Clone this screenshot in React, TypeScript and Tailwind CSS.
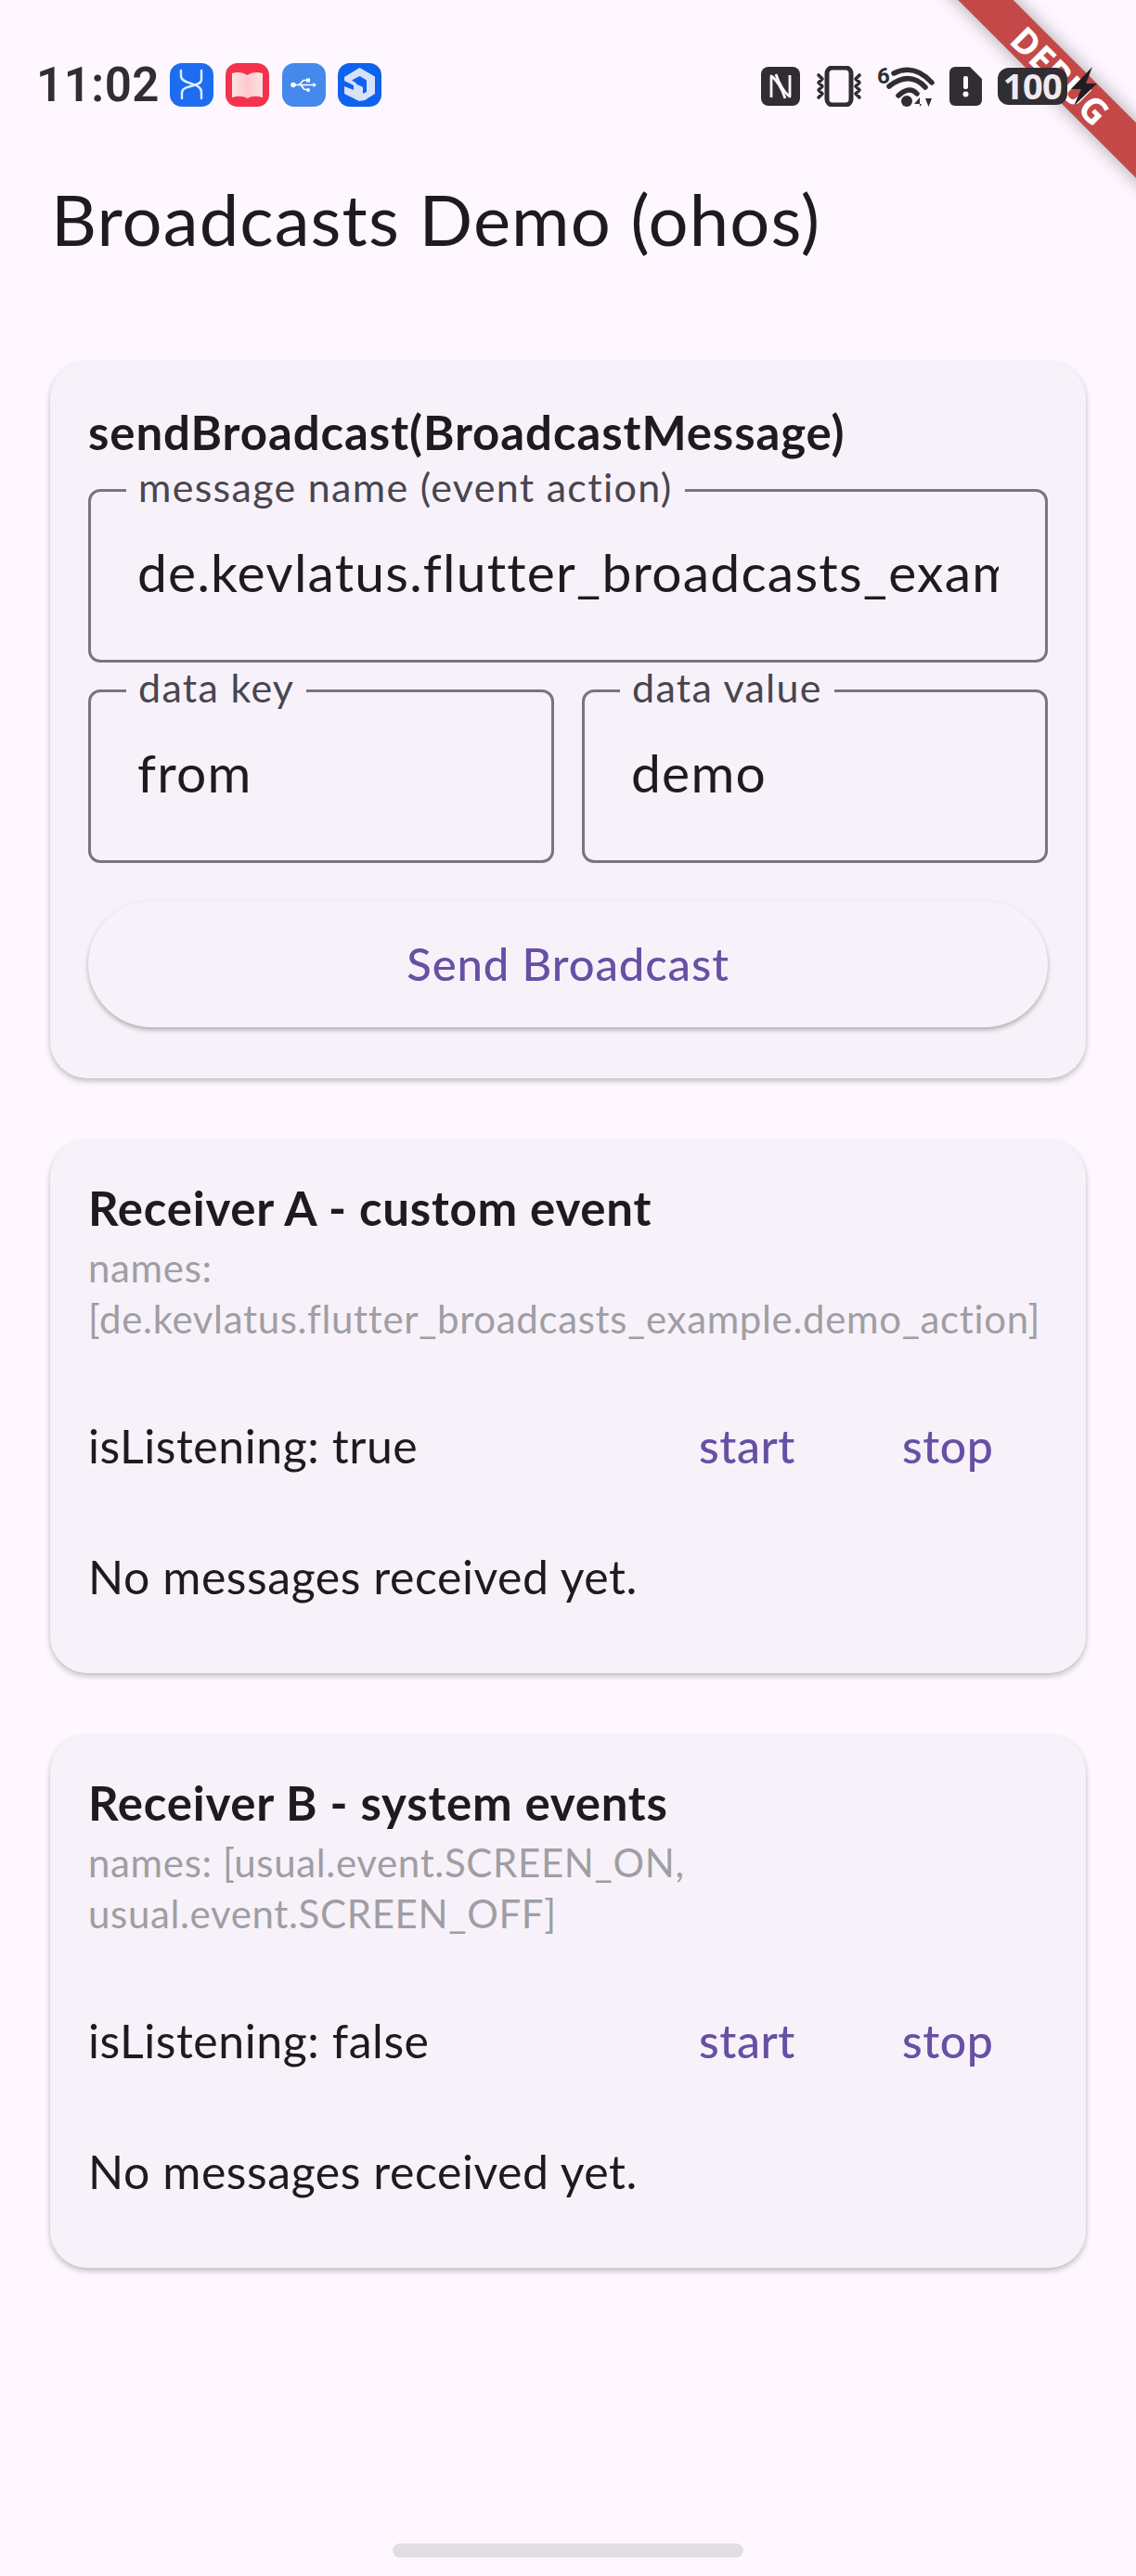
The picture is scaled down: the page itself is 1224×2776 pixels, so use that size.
const AppIcon = ({ bg, children }: { bg: string; children: React.ReactNode }) => (
  <div className={`w-[47px] h-[47px] rounded-[13px] flex items-center justify-center ${bg}`}>
    <svg viewBox="0 0 47 47" className="w-[47px] h-[47px]">{children}</svg>
  </div>
);

// ============= Status bar =============
const StatusBar = () => (
  <div className="relative z-10 h-[68px] mt-[68px] mx-0 flex items-start justify-between pl-[39px] pr-[39px] text-[#312e33]">
    <div className="flex items-center h-[47px]">
      <span className="text-[51px] leading-none font-semibold font-['Roboto',sans-serif] mr-[11px] tracking-[0.5px]">11:02</span>
      <div className="flex gap-[13.5px]">
        <AppIcon bg="bg-[#1e6cf0]">
          <g fill="none" stroke="#dff0ff" strokeWidth="2.4" strokeLinecap="round">
            <path d="M12 8v6c0 9 22 7 22 17v7" />
            <path d="M34 8v10c0 8-21 5-21 14v6" />
          </g>
        </AppIcon>
        <AppIcon bg="bg-[#f4324c]">
          <defs>
            <linearGradient id="bookPage" x1="0" x2="1" y1="0" y2="0">
              <stop offset="0" stopColor="#fde4e2" />
              <stop offset="0.5" stopColor="#fbc9cd" />
              <stop offset="1" stopColor="#fde4e2" />
            </linearGradient>
          </defs>
          <path d="M7 11c7-2 12-1 16.500 2C28 10 33 9 40 11v26c-7-2-12-1.500-16.500 1C19 35.500 14 35 7 37z" fill="url(#bookPage)" />
        </AppIcon>
        <AppIcon bg="bg-[#4589ec]">
          <g fill="none" stroke="#fff" strokeWidth="1.600">
            <path d="M12 23.500h24M18 23.500l5-5h3M20 23.500l4 5h3" />
          </g>
          <circle cx="12" cy="23.500" r="2.800" fill="#fff" />
          <path d="M37 23.500l-3.500-2.500v5z" fill="#fff" />
          <rect x="26" y="16.500" width="4" height="4" fill="#fff" />
          <circle cx="28" cy="29" r="2" fill="#fff" />
        </AppIcon>
        <AppIcon bg="bg-[#0f62ee]">
          <path d="M23.500 5L40 14.500V33L29 40 23 41 7 33V15z" fill="#d6e1fa" />
          <path d="M15 18.500L23.500 14 31 18.500V31L27 33V25L22 23z" fill="#0f62ee" />
          <path d="M7 19l10 5v5L7 25z" fill="#0f62ee" />
          <path d="M19 22l4-2 4 2v4l-4-2z" fill="#0f62ee" />
        </AppIcon>
      </div>
    </div>

    <div className="flex items-center h-[47px] relative top-[1px]">
      {/* NFC */}
      <svg viewBox="0 0 42 42" className="w-[42px] h-[42px] mr-[16px]">
        <rect width="42" height="42" rx="8" fill="#312e33" />
        <g fill="none" stroke="#fdf7ff" strokeWidth="2.8" strokeLinejoin="round">
          <path d="M11 33V10c5 3 12 14 15 24" />
          <path d="M31 9v23c-5-3-12-14-15-24" />
        </g>
      </svg>
      {/* vibrate */}
      <svg viewBox="0 0 52 44" className="w-[52px] h-[44px] mr-[15px]">
        <rect x="13" y="2" width="26" height="40" rx="6" fill="none" stroke="#312e33" strokeWidth="5" />
        <path d="M4 10l4 4-4 4 4 4-4 4 4 4-4 4M48 10l-4 4 4 4-4 4 4 4-4 4 4 4" fill="none" stroke="#312e33" strokeWidth="3.6" strokeLinecap="round" strokeLinejoin="round" />
      </svg>
      {/* wifi 6 */}
      <svg viewBox="0 0 62 44" className="w-[62px] h-[44px] mr-[16px]">
        <text x="0" y="19" fontSize="24" fontWeight="700" fill="#312e33" fontFamily="Roboto, sans-serif">6</text>
        <path d="M18 8Q40-3 59 18M13 22Q35 5 52 23M23 32Q35 21 43 30" fill="none" stroke="#312e33" strokeWidth="5.500" strokeLinecap="round" />
        <circle cx="32" cy="38" r="6" fill="#312e33" />
        <path d="M46 44v-10l-6 7h8M52 35l7 0-3.500 9z" fill="#312e33" />
      </svg>
      {/* sim alert */}
      <svg viewBox="0 0 35 42" className="w-[35px] h-[42px] mr-[17px]">
        <path d="M6 0h16l13 13v23a6 6 0 0 1-6 6H6a6 6 0 0 1-6-6V6a6 6 0 0 1 6-6z" fill="#312e33" />
        <rect x="15" y="10" width="5" height="14" rx="2" fill="#fdf7ff" />
        <circle cx="17.500" cy="29.500" r="3" fill="#fdf7ff" />
      </svg>
      {/* battery */}
      <div className="w-[75px] h-[40px] rounded-[12px] bg-[#312e33] text-[#f0e9ee] text-[38px] leading-[39px] font-bold text-center font-['Open_Sans',sans-serif] tracking-[-0.5px]">
        100
      </div>
      <svg viewBox="0 0 36 42" className="w-[36px] h-[42px] -ml-[1px]">
        <path d="M28 0L5 24h11l-8 18 25-24H21z" fill="#211d22" />
      </svg>
    </div>
  </div>
);

// ============= Form pieces =============
const OutlinedField = ({ label, value, className = '' }: { label: string; value: string; className?: string }) => (
  <div className={`relative h-[187px] rounded-[13px] border-[3px] border-[#79747e] pl-[50px] pr-[50px] ${className}`}>
    <span className="absolute left-[38px] -top-[29px] bg-[#f7f2fa] px-[13px] text-[43px] leading-[48px] tracking-[1.3px] text-[#49454f] whitespace-nowrap">
      {label}
    </span>
    <div className="overflow-hidden whitespace-nowrap text-[57px] leading-[70px] tracking-[1.2px] mt-[51px] text-[#1d1b20]">{value}</div>
  </div>
);

const ReceiverCard = ({ title, names, listening }: { title: string; names: string[]; listening: string }) => (
  <section className="bg-[#f7f2fa] rounded-[40px] shadow-[0_3px_6px_rgba(0,0,0,0.25)] h-[574px] pl-[41px] pr-[30px] pt-[41px]">
    <h2 className="text-[51px] leading-[64px] tracking-[0.75px] font-bold text-[#1d1b20]">{title}</h2>
    <div className="mt-[5px] text-[42px] leading-[55px] tracking-[0.65px] text-[#a09ea3] whitespace-nowrap">
      {names.map(line => <div key={line}>{line}</div>)}
    </div>
    <div className="mt-[79px] flex items-center h-[60px] text-[50px] tracking-[0.55px] text-[#1d1b20]">
      <span className="flex-1">{listening}</span>
      <span className="w-[219px] text-[#6750a4] font-medium">start</span>
      <span className="w-[168px] text-[#6750a4] font-medium">stop</span>
    </div>
    <p className="mt-[81px] text-[50px] leading-[60px] tracking-[0.55px] text-[#1d1b20]">No messages received yet.</p>
  </section>
);

export default function App() {
  return (
    <div className="relative w-[1224px] h-[2776px] overflow-hidden bg-[#fef7ff] font-['Lato',sans-serif]">
      {/* Debug banner, the status bar paints over it */}
      <div className="absolute left-[943px] top-[60px] w-[400px] h-[42px] rotate-45 bg-[#b71c1c]/80 shadow-[0_0_20px_rgba(0,0,0,0.35)] flex items-center justify-center text-[38px] leading-none font-bold text-white font-['Open_Sans',sans-serif]">
        DEBUG
      </div>

      <StatusBar />

      <h1 className="ml-[55px] mt-[56px] text-[76px] leading-[88px] tracking-[1.1px] text-[#1d1b20]">Broadcasts Demo (ohos)</h1>

      <main className="mx-[54px] mt-[110px] flex flex-col gap-[67px]">
        <section className="bg-[#f7f2fa] rounded-[40px] shadow-[0_3px_6px_rgba(0,0,0,0.25)] h-[772px] px-[41px] pt-[44px]">
          <h2 className="text-[51px] leading-[64px] tracking-[0.9px] font-bold text-[#1d1b20]">sendBroadcast(BroadcastMessage)</h2>
          <OutlinedField className="mt-[29px]" label="message name (event action)" value="de.kevlatus.flutter_broadcasts_example.demo_action" />
          <div className="mt-[29px] flex gap-[30px]">
            <OutlinedField className="flex-1" label="data key" value="from" />
            <OutlinedField className="flex-1" label="data value" value="demo" />
          </div>
          <button className="mt-[41px] w-full h-[136px] rounded-full bg-[#f7f2fa] shadow-[0_3px_5px_rgba(0,0,0,0.28)] text-[49px] tracking-[0.9px] font-medium text-[#6750a4]">
            Send Broadcast
          </button>
        </section>

        <ReceiverCard
          title="Receiver A - custom event"
          names={['names:', '[de.kevlatus.flutter_broadcasts_example.demo_action]']}
          listening="isListening: true"
        />
        <ReceiverCard
          title="Receiver B - system events"
          names={['names: [usual.event.SCREEN_ON,', 'usual.event.SCREEN_OFF]']}
          listening="isListening: false"
        />
      </main>

      {/* Home indicator */}
      <div className="absolute left-[423px] top-[2741px] w-[378px] h-[15px] rounded-full bg-[#e2dce5]" />
    </div>
  );
}
